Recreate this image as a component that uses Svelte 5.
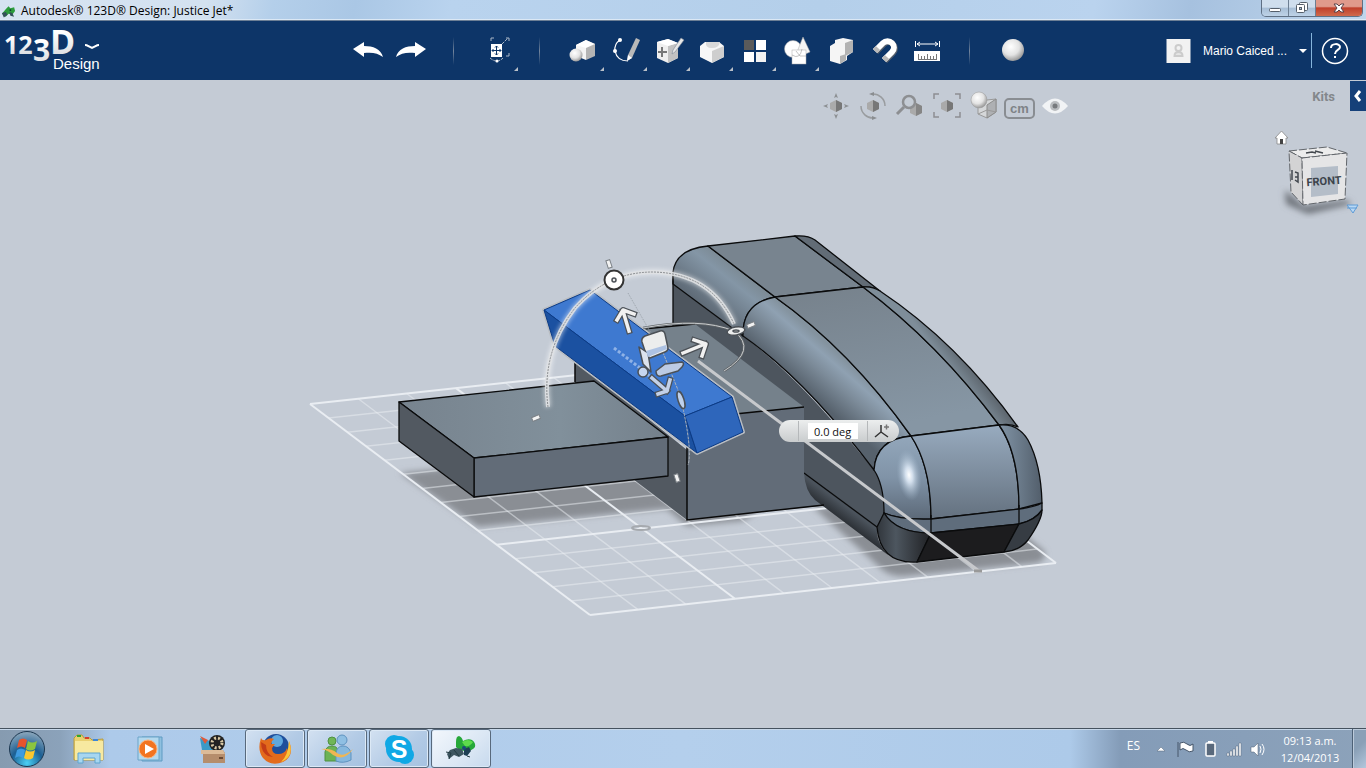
<script lang="ts">
  let angle = '0.0 deg';

  type Point = [number, number];

  // ground grid corners: back left, front left, back right, front right
  const backLeft: Point = [310, 404];
  const frontLeft: Point = [590, 615];
  const backRight: Point = [770, 354];
  const frontRight: Point = [1056, 563];

  const mix = (a: Point, b: Point, t: number): Point => [
    a[0] + (b[0] - a[0]) * t,
    a[1] + (b[1] - a[1]) * t
  ];

  const rows = Array.from({ length: 16 }, (_, i) => ({
    from: mix(backLeft, frontLeft, i / 15),
    to: mix(backRight, frontRight, i / 15),
    major: i === 0 || i === 10 || i === 15
  }));

  const columns = [0, 48, 96, 145, 194, 242, 290, 338, 387, 432, 466].map((x, i) => ({
    from: mix(backLeft, backRight, (x * 1.02) / 466),
    to: mix(frontLeft, frontRight, x / 466),
    major: i === 0 || i === 3 || i === 10
  }));

  const arrows = [
    'M629 331L623 311M617 320L623 310 634 314',
    'M683 353L705 344M694 340L706 344 702 356',
    'M652 378L667 391M658 394L667 391 670 380'
  ];
</script>

<div class="app">
  <header class="titlebar">
    <svg class="app-icon" viewBox="0 0 16 14" aria-hidden="true">
      <path d="M1 10l4-5 3-3 2 2 4-1 1 4-3 4-4-1-3 3z" fill="#2c9c3c" />
      <path d="M1 9l4-1 2 3-4 3zM9 8l3 1 2 4-4-1z" fill="#34505a" />
      <circle cx="10" cy="6" r="1" fill="#133" />
    </svg>
    <h1>Autodesk® 123D® Design: Justice Jet*</h1>
    <div class="window-buttons">
      <button aria-label="Minimize">
        <svg viewBox="0 0 14 14"><rect x="1.5" y="7.5" width="11" height="3" rx="1" fill="#fff" stroke="#555f6b" /></svg>
      </button>
      <button aria-label="Restore">
        <svg viewBox="0 0 14 14" fill="#fff" stroke="#555f6b">
          <rect x="4.5" y="1.5" width="8" height="8" rx="1" />
          <rect x="1.5" y="3.5" width="8" height="8" rx="1" />
          <rect x="4.5" y="6.5" width="2" height="2" fill="#b5c7da" />
        </svg>
      </button>
      <button class="close" aria-label="Close">
        <svg viewBox="0 0 14 14"><path d="M2 3h3l2 2 2-2h3l-3 4 3 4H9L7 9l-2 2H2l3-4z" fill="#fff" stroke="#5b4349" /></svg>
      </button>
    </div>
  </header>

  <nav class="toolbar">
    <button class="brand" aria-label="123D Design menu">
      <svg viewBox="0 0 100 50">
        <defs>
          <linearGradient id="logo" x1="0" y1="0" x2="0" y2="1">
            <stop offset="0.3" stop-color="#fff" />
            <stop offset="1" stop-color="#cfd2d6" />
          </linearGradient>
        </defs>
        <g class="logo" fill="url(#logo)">
          <text x="-1" y="28" font-size="25">12</text>
          <text x="28" y="35" font-size="30">3</text>
          <text x="45" y="28" font-size="34">D</text>
        </g>
        <text x="48" y="43" class="product">Design</text>
        <path d="M80 19q2 0 3 1l4 2 4-2q1-1 3-1" fill="none" stroke="#fff" stroke-width="2" />
      </svg>
    </button>

    <div class="tools">
      <button aria-label="Undo">
        <svg viewBox="0 0 32 32"><path d="M1 14L12 7v4c9 0 17 3 19 11-5-4-11-5-19-4v4z" fill="#fff" /></svg>
      </button>
      <button aria-label="Redo">
        <svg viewBox="0 0 32 32"><path d="M31 14L20 7v4C11 11 3 14 1 22c5-4 11-5 19-4v4z" fill="#fff" /></svg>
      </button>
      <span class="divider"></span>
      <button class="menu" aria-label="Transform">
        <svg viewBox="0 0 32 32">
          <rect x="10" y="9" width="11" height="13" fill="#fff" />
          <path d="M15.500 11v9M11 15.500h9M14 12.500l1.500-1.500 1.500 1.500M14 18.500l1.500 1.500 1.500-1.500M12.500 14L11 15.500l1.500 1.500M18.500 14l1.500 1.500-1.500 1.500" stroke="#0d3568" fill="none" />
          <path d="M10 6V3h3M25 3h3v3M28 18v3h-3" stroke="#a9b6c6" fill="none" />
          <path d="M21 9l6-6M9 23q7 6 13 0" stroke="#a9b6c6" fill="none" stroke-dasharray="3 1" />
          <circle cx="16" cy="26" r="1.500" fill="#fff" />
        </svg>
      </button>
      <span class="divider"></span>
      <button class="menu" aria-label="Primitives">
        <svg viewBox="0 0 32 32">
          <defs>
            <radialGradient id="ball" cx="0.4" cy="0.35" r="0.7">
              <stop offset="0" stop-color="#fff" />
              <stop offset="0.55" stop-color="#e3e3e3" />
              <stop offset="1" stop-color="#8d8d8d" />
            </radialGradient>
          </defs>
          <path d="M9 10l10-5v20l-10-4z" fill="#f4f4f4" />
          <path d="M19 5l9 4v12l-9 4z" fill="#b4b4b4" />
          <path d="M9 10l10-5 9 4-9 4z" fill="#fff" />
          <circle cx="9" cy="20" r="6.500" fill="url(#ball)" />
        </svg>
      </button>
      <button class="menu" aria-label="Sketch">
        <svg viewBox="0 0 32 32">
          <path d="M10 5Q4 9 5 16q2 10 13 10" fill="none" stroke="#fff" stroke-width="1.200" />
          <path d="M26 3l4 2-8 18-5 3 1-6z" fill="#b9b9b9" />
          <path d="M18 20l4 3-5 3z" fill="#fff" />
          <circle cx="10" cy="5" r="2" fill="#fff" />
          <circle cx="5" cy="16" r="2" fill="#fff" />
        </svg>
      </button>
      <button class="menu" aria-label="Construct">
        <svg viewBox="0 0 32 32">
          <path d="M4 7l11-3 10 4v15l-10 5-11-5z" fill="#efefef" />
          <path d="M15 11l10-3v15l-10 5z" fill="#c2c2c2" />
          <path d="M4 7l11-3 10 4-10 3z" fill="#fff" />
          <path d="M9 12v10M5 17h9" stroke="#777" stroke-width="2" />
          <path d="M28 3l3 2-9 12-3 2 1-4z" fill="#e8e8e8" stroke="#7e8896" stroke-width="0.600" />
        </svg>
      </button>
      <button class="menu" aria-label="Modify">
        <svg viewBox="0 0 32 32">
          <path d="M4 11l5-4h14l5 4v11l-12 6-12-6z" fill="#f7f7f7" />
          <path d="M16 16l12-5v11l-12 6z" fill="#cecece" />
          <path d="M10 7h14q-1 6-8 6t-6-6z" fill="#d9d9d9" />
        </svg>
      </button>
      <button class="menu" aria-label="Pattern">
        <svg viewBox="0 0 32 32">
          <rect x="5" y="5" width="10" height="10" fill="#5a5a5a" />
          <rect x="17" y="5" width="10" height="10" fill="#fff" />
          <rect x="5" y="17" width="10" height="10" fill="#fff" />
          <rect x="17" y="17" width="10" height="10" fill="#f2f2f2" />
        </svg>
      </button>
      <button class="menu" aria-label="Grouping">
        <svg viewBox="0 0 32 32" stroke="#aaa" stroke-width="0.500">
          <circle cx="11" cy="14" r="8.500" fill="#fff" />
          <path d="M21 2l7 15q-7 4-13 0z" fill="#f4f4f4" />
          <rect x="10" y="15" width="14" height="14" fill="#fff" />
          <path d="M10 20q8 5 10-6M14 16l4 5h6" fill="none" stroke="#888" />
        </svg>
      </button>
      <button aria-label="Combine">
        <svg viewBox="0 0 32 32">
          <path d="M5 11l5-3V5l8-2 10 2v12l-6 4v4l-7 4-10-3z" fill="#f5f5f5" />
          <path d="M20 8l8-3v12l-8 4zM15 21l6-2v6l-6 4z" fill="#b3b3b3" />
        </svg>
      </button>
      <button aria-label="Snap">
        <svg viewBox="0 0 32 32" fill="none" stroke-width="6">
          <path d="M8 17l8-8a6 6 0 0 1 9 9l-8 8" stroke="#555e6a" />
          <path d="M7 16l8-8a6 6 0 0 1 9 9l-8 8" stroke="#fff" />
          <path d="M7 16l3-3M16 25l3-3" stroke="#b9b9b9" />
        </svg>
      </button>
      <button aria-label="Measure">
        <svg viewBox="0 0 32 32">
          <path d="M4.500 6v6M28.500 6v6M6 9h21M9 7L6 9l3 2M24 7l3 2-3 2" fill="none" stroke="#fff" />
          <rect x="3" y="16" width="26" height="10" fill="#fff" />
          <path d="M7.500 19v6M10.500 21v4M13.500 21v4M16.500 19v6M19.500 21v4M22.500 21v4M25.500 19v6M7 24.500h19" stroke="#777" />
        </svg>
      </button>
      <span class="divider"></span>
      <button aria-label="Material">
        <svg viewBox="0 0 32 32"><circle cx="16" cy="15" r="11" fill="url(#ball)" /></svg>
      </button>
    </div>

    <div class="account">
      <button class="user">
        <svg class="avatar" viewBox="0 0 24 24" aria-hidden="true">
          <rect width="24" height="24" fill="#f2f2f2" />
          <circle cx="12" cy="9" r="3" fill="none" stroke="#ccc" stroke-width="2" />
          <path d="M8 17q0-4 4-4t4 4z" fill="#e4e4e4" stroke="#ccc" stroke-width="2" />
        </svg>
        <span>Mario Caiced ...</span>
        <i class="caret"></i>
      </button>
      <button class="help" aria-label="Help">
        <svg viewBox="0 0 28 28" fill="none" stroke="#fff">
          <circle cx="14" cy="14" r="12.500" stroke-width="1.500" />
          <path d="M10 11c0-5 9-5 9-1 0 3-5 3-5 7" stroke-width="2" />
          <path d="M13 20h2" stroke-width="2" />
        </svg>
      </button>
    </div>
  </nav>

  <main class="viewport">
    <svg class="scene" viewBox="0 80 1366 648" aria-label="3D model">
      <defs>
        <linearGradient id="slabTop" x1="0" y1="0" x2="1" y2="0">
          <stop offset="0" stop-color="#77838e" />
          <stop offset="0.6" stop-color="#81909b" />
          <stop offset="1" stop-color="#74808b" />
        </linearGradient>
        <linearGradient id="bodyTop" x1="0" y1="0" x2="0.3" y2="1">
          <stop offset="0" stop-color="#76818b" />
          <stop offset="1" stop-color="#8696a4" />
        </linearGradient>
        <linearGradient id="fillet" gradientUnits="userSpaceOnUse" x1="797" y1="383" x2="829" y2="346">
          <stop offset="0" stop-color="#56616c" />
          <stop offset="0.5" stop-color="#7c8b99" />
          <stop offset="0.8" stop-color="#8fa1b2" />
          <stop offset="1" stop-color="#84939f" />
        </linearGradient>
        <linearGradient id="backFillet" gradientUnits="userSpaceOnUse" x1="700" y1="302" x2="732" y2="262">
          <stop offset="0" stop-color="#606c78" />
          <stop offset="0.7" stop-color="#8496a6" />
          <stop offset="1" stop-color="#7b8993" />
        </linearGradient>
        <linearGradient id="rightFillet" gradientUnits="userSpaceOnUse" x1="935" y1="350" x2="952" y2="337">
          <stop offset="0" stop-color="#7e8d99" />
          <stop offset="1" stop-color="#596169" />
        </linearGradient>
        <linearGradient id="nose" x1="0" y1="0" x2="0" y2="1">
          <stop offset="0" stop-color="#98abbf" />
          <stop offset="1" stop-color="#64717f" />
        </linearGradient>
        <linearGradient id="noseLeft" x1="0" y1="0" x2="0" y2="1">
          <stop offset="0" stop-color="#93a7bb" />
          <stop offset="0.5" stop-color="#8093a7" />
          <stop offset="1" stop-color="#5c6978" />
        </linearGradient>
        <linearGradient id="noseRight" x1="0" y1="0" x2="1" y2="0">
          <stop offset="0" stop-color="#8194a6" />
          <stop offset="1" stop-color="#525e6b" />
        </linearGradient>
        <linearGradient id="keel" gradientUnits="userSpaceOnUse" x1="845" y1="506" x2="834" y2="521">
          <stop offset="0" stop-color="#4b535c" />
          <stop offset="1" stop-color="#202327" />
        </linearGradient>
        <linearGradient id="keelFront" x1="0" y1="0" x2="1" y2="0">
          <stop offset="0" stop-color="#31363c" />
          <stop offset="0.35" stop-color="#4d565f" />
          <stop offset="1" stop-color="#1f2023" />
        </linearGradient>
        <radialGradient id="shine">
          <stop offset="0" stop-color="#fff" />
          <stop offset="0.3" stop-color="#dbe7f4" stop-opacity="0.9" />
          <stop offset="1" stop-color="#9db3c8" stop-opacity="0" />
        </radialGradient>
        <filter id="soft" x="-20%" y="-20%" width="140%" height="140%"><feGaussianBlur stdDeviation="3" /></filter>
        <filter id="glow" filterUnits="userSpaceOnUse" x="530" y="255" width="230" height="170"><feGaussianBlur stdDeviation="2" /></filter>
      </defs>

      <!-- ground shadows -->
      <g fill="#8a8e94" filter="url(#soft)">
        <path d="M400 473l60-6 160-10 55 51-197 19z" />
        <path d="M662 505l25 21 56-5 15-10z" />
        <path d="M812 506l72 65q8 6 22 5l130-13q12-3 8-12l-30-25z" />
      </g>

      <g class="grid">
        {#each [...rows, ...columns] as line}
          <line class:major={line.major} x1={line.from[0]} y1={line.from[1]} x2={line.to[0]} y2={line.to[1]} />
        {/each}
      </g>
      <ellipse cx="641" cy="528" rx="9" ry="2" fill="none" stroke="#a5a9ae" stroke-width="2" />

      <!-- long rounded body -->
      <path d="M780 440H830V505L780 510z" fill="#626c78" />
      <path d="M673 284L673 330 804 473 877 527 884 513Q884 485 874 470 830 416 797 383 767 353 740 334z" fill="#4d555e" />
      <path d="M804 473L877 527Q876 543 888 555L815 500Q805 491 804 473z" fill="url(#keel)" />
      <g class="edged">
        <path d="M673 284V272Q676 249 708 246L775 297Q742 303 743 336z" fill="url(#backFillet)" />
        <path d="M708 246L795 236 863 287 775 297z" fill="#78848f" />
        <path d="M795 236Q808 235 815 240L880 291Q872 286 863 287z" fill="#626c76" />
        <path d="M743 336Q742 303 775 297 850 350 911 436 876 439 874 470 805 379 743 336z" fill="url(#fillet)" />
        <path d="M775 297L863 287Q938 343 999 425L911 436Q850 350 775 297z" fill="url(#bodyTop)" />
        <path d="M863 287Q872 286 880 291 958 343 1018 427 1010 423 999 425 938 343 863 287z" fill="url(#rightFillet)" />
        <path d="M874 470Q876 439 911 436 931 466 931 519 900 520 884 513 884 485 874 470z" fill="url(#noseLeft)" />
        <path d="M911 436L999 425Q1019 453 1019 509L931 519Q931 466 911 436z" fill="url(#nose)" />
        <path d="M999 425Q1018 423 1028 440 1041 464 1042 503L1019 509Q1019 453 999 425z" fill="url(#noseRight)" />
        <path d="M884 513Q900 520 931 519L1019 509Q1035 507 1042 503V510Q1034 521 1019 524L931 533Q896 533 884 513z" fill="#5f6d7c" />
        <path d="M884 513Q896 533 931 533L917 562Q880 564 877 527z" fill="url(#keelFront)" />
        <path d="M931 533L1019 524 1004 552 917 562z" fill="#1c1c1e" />
        <path d="M1019 524Q1036 520 1042 510 1042 520 1028 540 1019 551 1004 552z" fill="#363c43" />
        <path d="M931 515v18M1019 505v19" fill="none" />
        <path d="M804 473l73 54M673 273v56" fill="none" />
      </g>
      <ellipse cx="909" cy="475" rx="12" ry="26" fill="url(#shine)" transform="rotate(-8 909 475)" />

      <!-- middle block -->
      <path d="M575 360L687 450V520L575 435z" fill="#525961" />
      <path d="M600 333L695 324 804 407 687 419z" fill="#75818b" />
      <path d="M687 419L804 407V507L687 520z" fill="#626c78" />
      <path d="M643 329l52-5M804 407l-117 12v101l137-15M575 360v22" fill="none" stroke="#080808" stroke-width="1.500" />

      <!-- slab -->
      <g class="edged">
        <path d="M399 402L594 381 668 437 474 458z" fill="url(#slabTop)" />
        <path d="M474 458L668 437V476L474 497z" fill="#626c78" />
        <path d="M399 402L474 458V497L399 441z" fill="#525961" />
      </g>

      <!-- selected bar -->
      <path d="M544 310L590 290 732 397 743 432 697 453 555 346z" fill="#2e66bb" stroke="#b9bdc2" stroke-width="4" stroke-linejoin="round" />
      <g stroke="#0c3b85" stroke-linejoin="round">
        <path d="M544 310L590 290 732 397 685 416z" fill="#3e79d0" />
        <path d="M544 310L685 416 697 453 555 346z" fill="#1b51a1" />
        <path d="M685 416L732 397 743 432 697 453z" fill="#2e66bb" />
      </g>

      <!-- rotation axis -->
      <path d="M698 361L979 571" stroke="#c7c9cc" stroke-width="3" />
      <path d="M974 571h8" stroke="#999" stroke-width="3" />

      <!-- manipulator -->
      <g fill="none">
        <path d="M548 407Q541 352 575 308 607 272 653 272 711 273 734 324" stroke="#fff" stroke-width="6" opacity="0.5" filter="url(#glow)" />
        <path d="M548 407Q541 352 575 308 607 272 653 272 711 273 734 324" stroke="#dfe1e3" stroke-width="4" opacity="0.9" />
        <path d="M548 407Q541 352 575 308 607 272 653 272 711 273 734 324" stroke="#8c8f92" stroke-dasharray="2 1" />
        <path d="M643 328Q700 317 734 331 758 350 724 371" stroke="#5f6468" stroke-width="2.500" />
        <path d="M643 328Q700 317 734 331 758 350 724 371" stroke="#c9ccce" />
        <path d="M628 293L652 335" stroke="#9aa2aa" stroke-dasharray="1 1" />
        <path d="M660 345L680 395Q693 450 688 465" stroke="#aeb4ba" stroke-dasharray="3 1" />
        <path d="M614 348L640 368M647 374L654 380" stroke="#8fb2e6" stroke-width="3" stroke-dasharray="3 2" />
      </g>
      <g fill="none" stroke-linecap="square" stroke-linejoin="round">
        {#each arrows as d, i}
          <path {d} stroke="#4b5056" stroke-width="6" />
          <path {d} stroke={i === 2 ? '#c3d1e8' : '#f1f1f1'} stroke-width="3.500" />
        {/each}
      </g>
      <g fill="#eceded" stroke="#4b5056" stroke-width="1.500" stroke-linejoin="round">
        <path d="M642 342Q641 338 645 336L660 331Q664 330 665 334L668 348Q668 351 665 352L650 358Q646 358 646 354z" />
        <path d="M639 347L648 353 651 372 643 364z" fill="#dce3ee" />
        <path d="M656 371L665 364 682 362Q685 363 682 367L678 371 661 376Q656 377 656 371z" fill="#bccbe4" />
        <ellipse cx="681" cy="400" rx="3" ry="9" fill="#bdd0ec" transform="rotate(-18 681 400)" />
        <circle cx="643" cy="372" r="5" fill="#c5d5ef" />
        <circle cx="614" cy="280" r="9.500" fill="#fff" stroke="#333" stroke-width="2" />
        <circle cx="614" cy="280" r="2" />
        <ellipse cx="736" cy="331" rx="9" ry="4" transform="rotate(-10 736 331)" />
        <ellipse cx="736" cy="331" rx="3" ry="1" />
      </g>
      <path d="M646 351l20-6 1 4-19 8z" fill="#adc2e3" />
      <g fill="#f2f2f2" stroke="#7b8086">
        <rect x="-4" y="-2" width="8" height="4" transform="translate(609 264) rotate(72)" />
        <rect x="-4" y="-2" width="8" height="4" transform="translate(751 325) rotate(-22)" />
        <rect x="-4" y="-2" width="8" height="4" transform="translate(536 418) rotate(-22)" />
        <rect x="-4" y="-2" width="8" height="4" transform="translate(677 478) rotate(72)" />
      </g>
    </svg>

    <div class="view-tools">
      <button aria-label="Pan">
        <svg viewBox="0 0 30 30">
          <path d="M15 2l2 5-2-1-2 1zM15 28l2-5-2 1-2-1zM2 15l5-2-1 2 1 2zM28 15l-5-2 1 2-1 2z" fill="#8d9093" />
          <path d="M9 12l6-3 6 3v6l-6 3-6-3z" fill="#aaa" /><path d="M15 9l6 3v6l-6 3z" fill="#777" />
        </svg>
      </button>
      <button aria-label="Orbit">
        <svg viewBox="0 0 30 30">
          <path d="M9 12l6-3 6 3v6l-6 3-6-3z" fill="#aaa" /><path d="M15 9l6 3v6l-6 3z" fill="#777" />
          <path d="M27 15A12 12 0 0 0 14 3M3 15a12 12 0 0 0 13 12" fill="none" stroke="#999c9f" stroke-width="1.500" />
          <path d="M11 3l5-2v4zM19 27l-5-2v4z" fill="#8a8d90" />
        </svg>
      </button>
      <button aria-label="Zoom">
        <svg viewBox="0 0 30 30">
          <path d="M15 15l6-3 6 3v7l-6 3-6-3z" fill="#aaa" /><path d="M21 12l6 3v7l-6 3z" fill="#858585" />
          <circle cx="14" cy="11" r="6" fill="#c5ccd5" stroke="#8d8f92" stroke-width="2.500" />
          <path d="M9 16l-7 7" stroke="#8d8f92" stroke-width="3" />
        </svg>
      </button>
      <button aria-label="Fit">
        <svg viewBox="0 0 30 30">
          <path d="M2 8V3h5M23 3h5v5M28 21v5h-5M7 26H2v-5" fill="none" stroke="#8d8f92" stroke-width="1.500" />
          <path d="M9 12l6-3 6 3v6l-6 3-6-3z" fill="#aaa" /><path d="M15 9l6 3v6l-6 3z" fill="#777" />
        </svg>
      </button>
      <button aria-label="Material view">
        <svg viewBox="0 0 30 30">
          <path d="M9 14l9-5 9-1v13l-9 6-9-4z" fill="#d5d7d9" stroke="#999" />
          <path d="M18 14l9-6v13l-9 6z" fill="#aeb0b3" stroke="#8c8c8c" />
          <path d="M9 23l9-4 9 2" fill="none" stroke="#999" />
          <circle cx="10" cy="9" r="8" fill="url(#ball)" stroke="#9b9b9b" stroke-width="0.500" />
        </svg>
      </button>
      <button class="unit">cm</button>
      <button class="eye" aria-label="Visibility">
        <svg viewBox="0 0 30 30">
          <path d="M2 15q13-15 26 0-13 15-26 0z" fill="#f1f3f5" />
          <circle cx="15" cy="15" r="5" fill="#b9bcbf" /><circle cx="15" cy="15" r="2.500" fill="#777a7d" />
        </svg>
      </button>
    </div>

    <aside class="kits">
      <span>Kits</span>
      <button aria-label="Open kits panel">
        <svg viewBox="0 0 8 14"><path d="M6 2L2 7l4 5" fill="none" stroke="#fff" stroke-width="3" /></svg>
      </button>
    </aside>

    <svg class="view-cube" viewBox="1260 120 106 100" role="img" aria-label="View cube">
      <path d="M1285 190l19 16 42-6 6 4-44 10-22-10z" fill="#6f747b" filter="url(#soft)" />
      <path d="M1275 138l6.500-7 6.500 7h-2v6h-9v-6z" fill="#fff" stroke="#888" stroke-width="0.800" />
      <path d="M1280 139h3v5h-3z" fill="#444" />
      <g stroke="#62666b" stroke-dasharray="8 2">
        <path d="M1289 151L1327 147 1347 153 1302 158z" fill="#ececec" />
        <path d="M1289 151L1302 158 1303 205 1291 192z" fill="#d3d3d4" />
        <path d="M1302 158L1347 153 1345 199 1303 205z" fill="#e5e5e6" />
      </g>
      <path d="M1311 168L1338 166V194L1311 197z" fill="#b4bdc8" />
      <path d="M1306 153l6-1 4 1M1315 151l8 2M1292 170v10M1295 172l3 1v9l-3-2M1295 177h3" fill="none" stroke="#42474d" stroke-width="1.500" />
      <text x="1324" y="185" text-anchor="middle" transform="rotate(-4 1324 181)">FRONT</text>
      <path d="M1347 205h11l-5 8z" fill="#b8d8f5" stroke="#5f9bd5" />
      <path d="M1347 208h10" stroke="#5f9bd5" />
    </svg>

    <form class="angle-box" on:submit|preventDefault>
      <i class="grip"></i>
      <input aria-label="Rotation angle" bind:value={angle} />
      <button aria-label="Change axis">
        <svg viewBox="0 0 16 16" fill="none" stroke="#333" stroke-width="1.500">
          <path d="M7 2v7l-6 5M7 9l7 5" /><path d="M10 4h5M12.500 1.500v5" stroke="#777" />
        </svg>
      </button>
    </form>
  </main>

  <footer class="taskbar">
    <button class="start" aria-label="Start">
      <svg viewBox="0 0 38 38">
        <defs>
          <radialGradient id="orb" cx="0.5" cy="0.9" r="0.9">
            <stop offset="0" stop-color="#4ad0f5" />
            <stop offset="0.5" stop-color="#1c5f93" />
            <stop offset="1" stop-color="#8fa9bd" />
          </radialGradient>
        </defs>
        <circle cx="19" cy="19" r="17.500" fill="url(#orb)" stroke="#1c3750" />
        <path d="M11 10q4-3 8 0l-2 8q-4-3-8 0z" fill="#e8542c" />
        <path d="M20 11q4 3 9 0l-2 8q-5 3-9 0z" fill="#8bc53f" />
        <path d="M9 20q4-3 8 0l-2 8q-4-3-8 0z" fill="#3f9be0" />
        <path d="M18 20q4 3 9 0l-2 8q-5 3-9 0z" fill="#fbc72e" />
      </svg>
    </button>
    <div class="apps">
      <button aria-label="Windows Explorer">
        <svg viewBox="0 0 34 34">
          <path d="M2 6l3-3h5l2 3h6l2 2 11-1v21H2z" fill="#e9d070" stroke="#b99b3c" />
          <path d="M3 9h28v19H3z" fill="#f7e9a0" />
          <path d="M5 4h4" stroke="#2fa62f" stroke-width="2" /><path d="M13 6h4" stroke="#d6402c" stroke-width="2" /><path d="M21 8h5" stroke="#3d87d8" stroke-width="2" />
          <path d="M6 31V21h22v10h-5v-5H11v5z" fill="#a7d6f0" stroke="#5fa4cf" />
        </svg>
      </button>
      <button aria-label="Windows Media Player">
        <svg viewBox="0 0 34 34">
          <path d="M8 5h20v24H8z" fill="#8fc0df" stroke="#5e9bc2" /><path d="M4 5h21v23H4z" fill="#b4d9ee" stroke="#6ba4c8" />
          <circle cx="14" cy="17" r="9" fill="#f27420" stroke="#fcb37c" /><path d="M11 12l9 5-9 5z" fill="#fff" />
        </svg>
      </button>
      <button aria-label="Games">
        <svg viewBox="0 0 34 34">
          <path d="M4 6l10 3 3 9H6z" fill="#3b9ac7" /><path d="M4 4l8 4-3 4z" fill="#de5a3c" />
          <circle cx="21" cy="11" r="8" fill="#222" />
          <circle cx="21" cy="11" r="5" fill="none" stroke="#d9c9a5" stroke-width="3" stroke-dasharray="2 2" />
          <path d="M7 18h20l2 3v10H7z" fill="#b58d6c" /><path d="M5 18h22l2 4H5z" fill="#dcbb98" /><path d="M23 26h4" stroke="#6b4a33" stroke-width="2" />
        </svg>
      </button>
      <button class="running" aria-label="Firefox">
        <svg viewBox="0 0 34 34">
          <circle cx="18" cy="15" r="13" fill="#1f4f9c" /><circle cx="19" cy="9" r="6" fill="#5fa8de" />
          <path d="M3 6q1 3 5 2 4-3 8-1-3 2-3 5h4l-3 4q0 6 6 6 7 0 9-6 2 6-1 10 4-7 3-17 6 15-6 21-12 5-20-4Q-1 18 3 6z" fill="#e36b1c" />
          <path d="M31 9q6 16-8 21 7-6 8-21z" fill="#fbc53a" /><path d="M3 10q0 10 7 14l5 1q-7-4-7-12z" fill="#c43d17" />
        </svg>
      </button>
      <button class="running" aria-label="Messenger">
        <svg viewBox="0 0 34 34">
          <circle cx="12" cy="9" r="4" fill="#70b657" stroke="#4f9140" /><path d="M5 29V20q1-6 7-6t6 6v9z" fill="#6bb356" stroke="#4f9140" />
          <circle cx="22" cy="8" r="5" fill="#8fbfe3" stroke="#5f93c0" /><path d="M16 29V21q1-7 7-7t8 7v7q-8 4-15 1z" fill="#86b8de" stroke="#5f93c0" />
          <path d="M1 17q10-1 16 4t16-4q-9 13-20 6-5-5-12-6z" fill="#f0b654" />
        </svg>
      </button>
      <button class="running" aria-label="Skype">
        <svg viewBox="0 0 34 34">
          <circle cx="12" cy="12" r="9" fill="#10a8e5" /><circle cx="23" cy="23" r="9" fill="#10a8e5" /><circle cx="17" cy="17" r="13" fill="#10a8e5" />
          <text x="17" y="26" class="skype-letter" text-anchor="middle">S</text>
        </svg>
      </button>
      <button class="running active" aria-label="123D Design">
        <svg viewBox="0 0 34 34">
          <path d="M12 10q0-6 3-6 3 1 4 5 5-3 9-1 4 3 3 7-3 4-9 4-7 0-10-4z" fill="#26a839" /><path d="M18 10q6-4 11 0-3 5-8 4z" fill="#5edb4c" />
          <path d="M3 22l3-4 6-2 6 1 2 5-5 3-5-2-5 4z" fill="#3e5660" /><path d="M20 17l5-2 2 4-4 5-3-1z" fill="#1e3f53" />
          <path d="M2 20l5 1-2 6M10 18l5 6M23 24l3 1" stroke="#243b42" fill="none" /><circle cx="20" cy="16" r="2" fill="#1c4a7a" />
        </svg>
      </button>
    </div>
    <div class="tray">
      <span class="lang">ES</span>
      <svg viewBox="0 0 112 20" role="img" aria-label="Tray icons">
        <path d="M1 12l4-4 4 4z" fill="#fff" stroke="#56677a" stroke-width="0.500" />
        <path d="M22 3v15M24 4q4-2 7 1t6 0v7q-4 2-7-1t-6 0z" fill="#fff" stroke="#46566a" />
        <rect x="50" y="4" width="9" height="13" rx="1" fill="#59697c" stroke="#fff" stroke-width="1.500" /><path d="M52 3h5" stroke="#fff" stroke-width="2" />
        <path d="M71 17v-3h2v3zM74 17v-5h2v5zM77 17V10h2v7zM80 17V7h2v10zM83 17V4h2v13z" fill="#fff" stroke="#5a6b7e" stroke-width="0.500" />
        <path d="M95 8h3l4-4v13l-4-4h-3z" fill="#fff" stroke="#4d5d70" stroke-width="0.500" /><path d="M104 7q2 3 0 7M106 5q4 5 0 11" fill="none" stroke="#fff" />
      </svg>
      <time><span>09:13 a.m.</span><span>12/04/2013</span></time>
      <button class="show-desktop" aria-label="Show desktop"></button>
    </div>
  </footer>
</div>

<style>
  :global(body) {
    margin: 0;
  }

  .app {
    display: flex;
    flex-direction: column;
    min-height: 100vh;
    font-family: "Liberation Sans", Arial, sans-serif;
    font-size: 12px;
    overflow: hidden;
  }

  button {
    display: flex;
    align-items: center;
    justify-content: center;
    padding: 0;
    border: 0;
    background: none;
    color: inherit;
    font: inherit;
  }

  svg {
    display: block;
    flex: none;
  }

  .titlebar {
    display: flex;
    align-items: flex-start;
    gap: 5px;
    height: 20px;
    padding: 0 3px 0 1px;
    border-bottom: 1px solid #6c7f95;
    background: linear-gradient(100deg, #d6e3f1 0%, #d3e1f0 15%, #b4cfea 20%, #aac7e5 26%, #b9d3ee 33%, #b4cfea 60%, #bad3ee 80%, #a6c1df 87%, #c0d6ec 100%);
    box-shadow: inset 0 -1px #dbe8f5;
  }

  .app-icon {
    width: 15px;
    height: 14px;
    margin-top: 4px;
  }

  h1 {
    flex: 1;
    margin: 0;
    font: 400 12px/22px "Open Sans", "Noto Sans", sans-serif;
    color: #000;
  }

  .window-buttons {
    display: flex;
    border: 1px solid #5f7084;
    border-top: 0;
    border-radius: 0 0 5px 5px;
    overflow: hidden;
  }

  .window-buttons button {
    width: 27px;
    height: 16px;
    border-right: 1px solid #6d7f93;
    background: linear-gradient(#cfdeed 45%, #a7bed6 50%, #bed2e7);
  }

  .window-buttons .close {
    width: 46px;
    border: 0;
    background: linear-gradient(#e09a8b 40%, #c0402b 50%, #d06a4c);
  }

  .window-buttons svg {
    width: 14px;
    height: 14px;
  }

  .toolbar {
    display: grid;
    grid-template-columns: 1fr auto 1fr;
    align-items: center;
    height: 59px;
    padding-left: 5px;
    background: #0d3568;
    color: #fff;
  }

  .brand {
    justify-self: start;
  }

  .brand svg {
    width: 100px;
    height: 50px;
    overflow: visible;
  }

  .logo {
    font-family: "Open Sans", sans-serif;
    font-weight: 700;
  }

  .product {
    font: 15px "Liberation Sans", Arial, sans-serif;
    fill: #fff;
  }

  .tools {
    display: flex;
    padding-left: 9px;
  }

  .tools button,
  .divider {
    position: relative;
    width: 43px;
    height: 40px;
  }

  .tools svg {
    width: 32px;
    height: 32px;
  }

  .menu::after {
    content: "";
    position: absolute;
    right: 0;
    bottom: 0;
    border: 2px solid #b9c0c8;
    border-top-color: transparent;
    border-left-color: transparent;
  }

  .divider {
    background: linear-gradient(transparent 15%, #73859d 50%, transparent 85%) center / 1px 100% no-repeat;
  }

  .account {
    display: flex;
    justify-self: end;
    align-items: center;
    padding-right: 17px;
  }

  .user {
    gap: 12px;
    height: 35px;
    padding-right: 4px;
    border-right: 1px solid #86b5dc;
  }

  .avatar {
    width: 25px;
    height: 24px;
  }

  .caret {
    border: 4px solid transparent;
    border-top-color: #fff;
    border-bottom: 0;
  }

  .help {
    margin-left: 9px;
  }

  .help svg {
    width: 28px;
    height: 28px;
  }

  .viewport {
    position: relative;
    flex: 1;
    min-height: 400px;
    background: #c4cbd5;
  }

  .scene {
    position: absolute;
    inset: 0;
    width: 100%;
    height: 100%;
  }

  .grid line {
    stroke: rgba(235, 239, 244, 0.5);
    stroke-width: 1.5;
  }

  .grid .major {
    stroke: #e9edf2;
    stroke-width: 2;
  }

  .edged path {
    stroke: #0a0b0c;
    stroke-width: 1.3;
    stroke-linejoin: round;
  }

  .view-tools {
    position: absolute;
    top: 8px;
    right: 294px;
    display: flex;
    align-items: center;
    height: 36px;
  }

  .view-tools button {
    width: 37px;
  }

  .view-tools svg {
    width: 30px;
    height: 30px;
  }

  .view-tools .unit {
    width: 31px;
    height: 21px;
    margin: 4px 2px 0;
    border: 2px solid #898d92;
    border-radius: 5px;
    color: #7f8387;
    font-size: 13px;
    font-weight: 700;
  }

  .view-tools .eye {
    width: 35px;
  }

  .kits {
    position: absolute;
    top: 1px;
    right: 0;
    display: flex;
    align-items: center;
    gap: 15px;
    color: #83878b;
    font: 700 13px Roboto, sans-serif;
  }

  .kits button {
    width: 16px;
    height: 30px;
    background: #154079;
  }

  .kits svg {
    width: 8px;
    height: 14px;
  }

  .view-cube {
    position: absolute;
    top: 40px;
    right: 0;
    width: 106px;
    height: 100px;
  }

  .view-cube text {
    font: 700 11px "Liberation Sans Narrow", Roboto, sans-serif;
    fill: #3c434b;
  }

  .angle-box {
    position: absolute;
    top: 340px;
    left: 57%;
    display: flex;
    align-items: center;
    width: 120px;
    height: 22px;
    border-radius: 11px;
    background: linear-gradient(#eceeee, #c9cccd);
  }

  .grip {
    width: 9px;
    height: 20px;
    margin-left: 10px;
    border-right: 1px solid #b5b8ba;
  }

  .angle-box input {
    box-sizing: border-box;
    width: 50px;
    height: 16px;
    margin-left: 9px;
    padding: 0;
    border: 0;
    background: #fff;
    color: #111;
    font: 11px "Open Sans", sans-serif;
    text-align: center;
  }

  .angle-box button {
    width: 30px;
    height: 20px;
    margin-left: 9px;
    border-left: 1px solid #b5b8ba;
  }

  .angle-box svg {
    width: 16px;
    height: 16px;
  }

  .taskbar {
    display: flex;
    box-sizing: border-box;
    height: 40px;
    border-top: 1px solid #45525f;
    background: linear-gradient(90deg, #869bb0 0, #8ba2ba 60px, #adcaea 110px, #b4cfec 50%, #adcae9 1070px, #849cb8 1120px, #8ca2ba 100%);
    box-shadow: inset 0 1px #c7d8ea;
  }

  .start {
    width: 54px;
    margin-right: 5px;
  }

  .start svg {
    width: 38px;
    height: 38px;
  }

  .apps {
    display: flex;
    gap: 2px;
    flex: 1;
  }

  .apps button {
    box-sizing: border-box;
    width: 60px;
  }

  .apps svg {
    width: 34px;
    height: 34px;
  }

  .apps .running {
    border: 1px solid #58697c;
    border-radius: 3px;
    background: linear-gradient(135deg, #d3e1f1, #b2cae5 60%, #a6c2e1);
    box-shadow: inset 0 0 0 1px #dce9f6;
  }

  .apps .active {
    background: linear-gradient(135deg, #f3f7fc, #dbe7f4 60%, #c7d9ed);
  }

  .skype-letter {
    font: 700 25px "Liberation Sans", Arial, sans-serif;
    fill: #fff;
  }

  .tray {
    display: flex;
    align-items: center;
    color: #fff;
    font: 11px/17px "Open Sans", sans-serif;
  }

  .lang {
    margin: 0 16px 6px 0;
    font-size: 12px;
  }

  .tray svg {
    width: 112px;
    height: 20px;
  }

  time {
    display: flex;
    flex-direction: column;
    align-items: center;
    width: 84px;
  }

  .show-desktop {
    align-self: stretch;
    width: 14px;
    border-left: 1px solid #4d6176;
    background: linear-gradient(135deg, #8aa0b7 45%, #b3c7dc);
    box-shadow: inset 1px 1px #bccbdb;
  }
</style>
